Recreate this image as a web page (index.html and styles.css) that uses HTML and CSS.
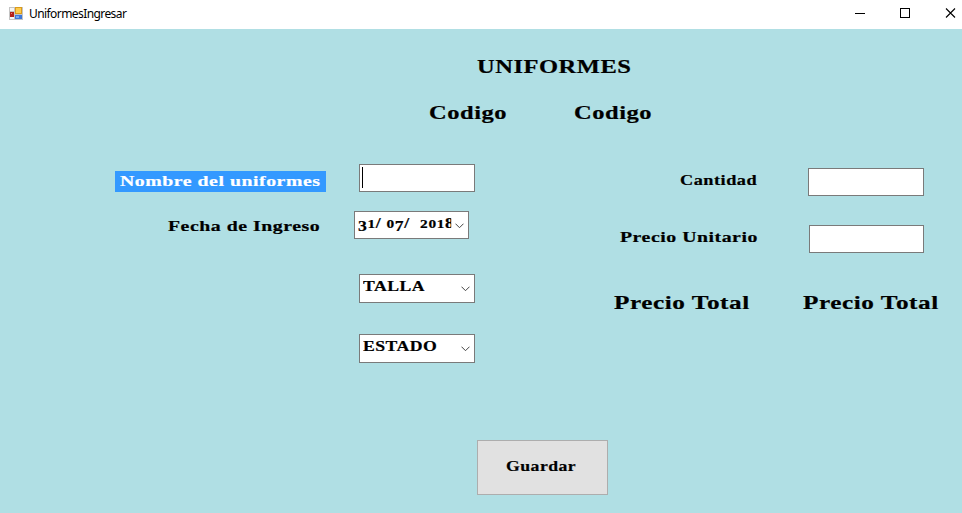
FILE: index.html
```html
<!DOCTYPE html>
<html lang="es">
<head>
<meta charset="utf-8">
<title>UniformesIngresar</title>
<link rel="stylesheet" href="styles.css">
</head>
<body>
<header class="titlebar">
  <svg class="app-icon" width="14" height="13" viewBox="0 0 14 13" shape-rendering="crispEdges">
    <rect width="14" height="13" fill="#c4c4c4"/>
    <path d="M1 1h4v3H1zM1 10h4v2H1z" fill="#f5f5f5"/>
    <rect x="6" y="0" width="7" height="7" fill="#d99a1c"/>
    <rect x="7" y="1" width="5" height="5" fill="#fdcb4c"/>
    <rect x="1" y="5" width="4" height="5" fill="#b3201a"/>
    <rect x="2" y="6" width="1" height="1" fill="#f08070"/>
    <rect x="6" y="8" width="7" height="4" fill="#3e78d8"/>
    <rect x="7" y="9" width="3" height="2" fill="#78a8f0"/>
  </svg>
  <span class="caption">UniformesIngresar</span>
  <svg class="window-buttons" width="103" height="12" viewBox="0 0 103 12" fill="none" stroke="#000">
    <path d="M0 6.5h10M45.5 1.500h9v9h-9z" shape-rendering="crispEdges"/>
    <path d="M91 1.500l9 9M100 1.500l-9 9" stroke-width="1.1"/>
  </svg>
</header>
<main class="form">
  <h1 class="heading"><span class="wide">UNIFORMES</span></h1>
  <div class="codes"><span class="big wide">Codigo</span><span class="big wide">Codigo</span></div>
  <div class="columns">
    <section class="left">
      <div class="row name-row">
        <label class="label selected"><span class="wide">Nombre del uniformes</span></label>
        <div class="box focused"><i class="caret"></i></div>
      </div>
      <div class="row date-row">
        <label class="label"><span class="wide">Fecha de Ingreso</span></label>
        <div class="box combo date"><span class="value"><span class="drop">3</span><span class="small">1</span>/ <span class="small">0</span><span class="drop">7</span>/  <span class="small">201</span>8</span><svg class="arrow" width="9" height="6" viewBox="0 0 9 6"><path d="M.5.7l4 4 4-4"/></svg></div>
      </div>
      <div class="box combo size"><span class="value">TALLA</span><svg class="arrow" width="9" height="6" viewBox="0 0 9 6"><path d="M.5.7l4 4 4-4"/></svg></div>
      <div class="box combo state"><span class="value">ESTADO</span><svg class="arrow" width="9" height="6" viewBox="0 0 9 6"><path d="M.5.7l4 4 4-4"/></svg></div>
    </section>
    <section class="right">
      <div class="row quantity-row">
        <label class="label"><span class="wide medium">Cantidad</span></label>
        <div class="box"></div>
      </div>
      <div class="row unit-row">
        <label class="label"><span class="wide">Precio Unitario</span></label>
        <div class="box"></div>
      </div>
      <div class="totals"><span class="big wide">Precio Total</span><span class="big wide">Precio Total</span></div>
    </section>
  </div>
  <button class="save"><span class="wide medium">Guardar</span></button>
</main>
</body>
</html>
```

FILE: styles.css
```css
* { box-sizing: border-box; }

body {
  margin: 0;
  width: 962px;
  height: 513px;
  overflow: hidden;
  background: #b0dfe4;
  color: #000;
  font: bold 15px/20px "Liberation Serif", serif;
  letter-spacing: 0.4px;
}

.titlebar {
  display: flex;
  align-items: center;
  height: 29px;
  padding: 0 4px 3px 9px;
  background: #fff;
}

.caption {
  margin: 2px 0 0 6px;
  font: 12px/16px "Noto Sans", sans-serif;
  letter-spacing: -0.58px;
}

.window-buttons { margin-left: auto; }

.wide {
  display: inline-block;
  white-space: nowrap;
  transform: scaleX(1.32);
  transform-origin: left;
}

.medium { transform: scaleX(1.22); }
.save .medium { transform: scaleX(1.18); }

.wide, .value { -webkit-text-stroke: 0.2px currentColor; }

.big, .heading {
  font-size: 18px;
  line-height: 24px;
}

.big, .heading .wide { transform: scaleX(1.36); }

.heading {
  margin: 26px 0 0 477px;
  font-weight: bold;
}

.codes {
  display: flex;
  margin: 22px 0 39px 429px;
}

.codes .big {
  flex: none;
  width: 145px;
}

.columns {
  display: flex;
  height: 276px;
}

.left { width: 600px; }

.row {
  display: flex;
  align-items: flex-start;
}

.label {
  height: 21px;
  margin-top: 5px;
}

.name-row .label {
  width: 211px;
  margin: 7px 33px 0 115px;
  padding-left: 5px;
}

.name-row .label .wide { margin-top: -1px; }

.selected {
  background: #3399ff;
  color: #fff;
}

.box {
  width: 116px;
  height: 28px;
  border: 1px solid #7a7a7a;
  background: #fff;
}

.caret {
  display: block;
  width: 1px;
  height: 21px;
  margin: 2px 0 0 2px;
  background: #000;
}

.date-row { margin-top: 19px; }

.date-row .label {
  width: 186px;
  margin-left: 168px;
}

.combo {
  display: flex;
  align-items: flex-start;
  justify-content: space-between;
  height: 29px;
  padding: 1px 4px 0 3px;
}

.size { margin: 35px 0 0 359px; }
.state { margin: 31px 0 0 359px; }

.date {
  width: 115px;
  height: 28px;
}

.value {
  width: 79px;
  overflow: hidden;
  white-space: pre;
  transform: scaleX(1.18);
  transform-origin: left;
}

.date .value { letter-spacing: 0.55px; }

.small { font-size: 13px; }

.drop {
  display: inline-block;
  height: 20px;
  padding-top: 3px;
  vertical-align: top;
}

.arrow {
  margin-top: 10px;
  fill: none;
  stroke: #444;
}

.right {
  width: 362px;
  padding-top: 4px;
}

.right .label { margin-top: 2px; }

.quantity-row .label {
  width: 128px;
  margin-left: 80px;
}

.unit-row { margin-top: 29px; }

.unit-row .label {
  width: 189px;
  margin-left: 20px;
}

.unit-row .box { width: 115px; }

.totals {
  display: flex;
  gap: 93px;
  margin: 38px 0 0 14px;
}

.totals .big {
  flex: none;
  width: 96px;
  transform: scaleX(1.4);
}

.save {
  display: block;
  width: 131px;
  height: 55px;
  margin-left: 477px;
  padding: 0 0 3px 28px;
  border: 1px solid #adadad;
  background: #e1e1e1;
  color: inherit;
  font: inherit;
  letter-spacing: inherit;
  text-align: left;
}
```
